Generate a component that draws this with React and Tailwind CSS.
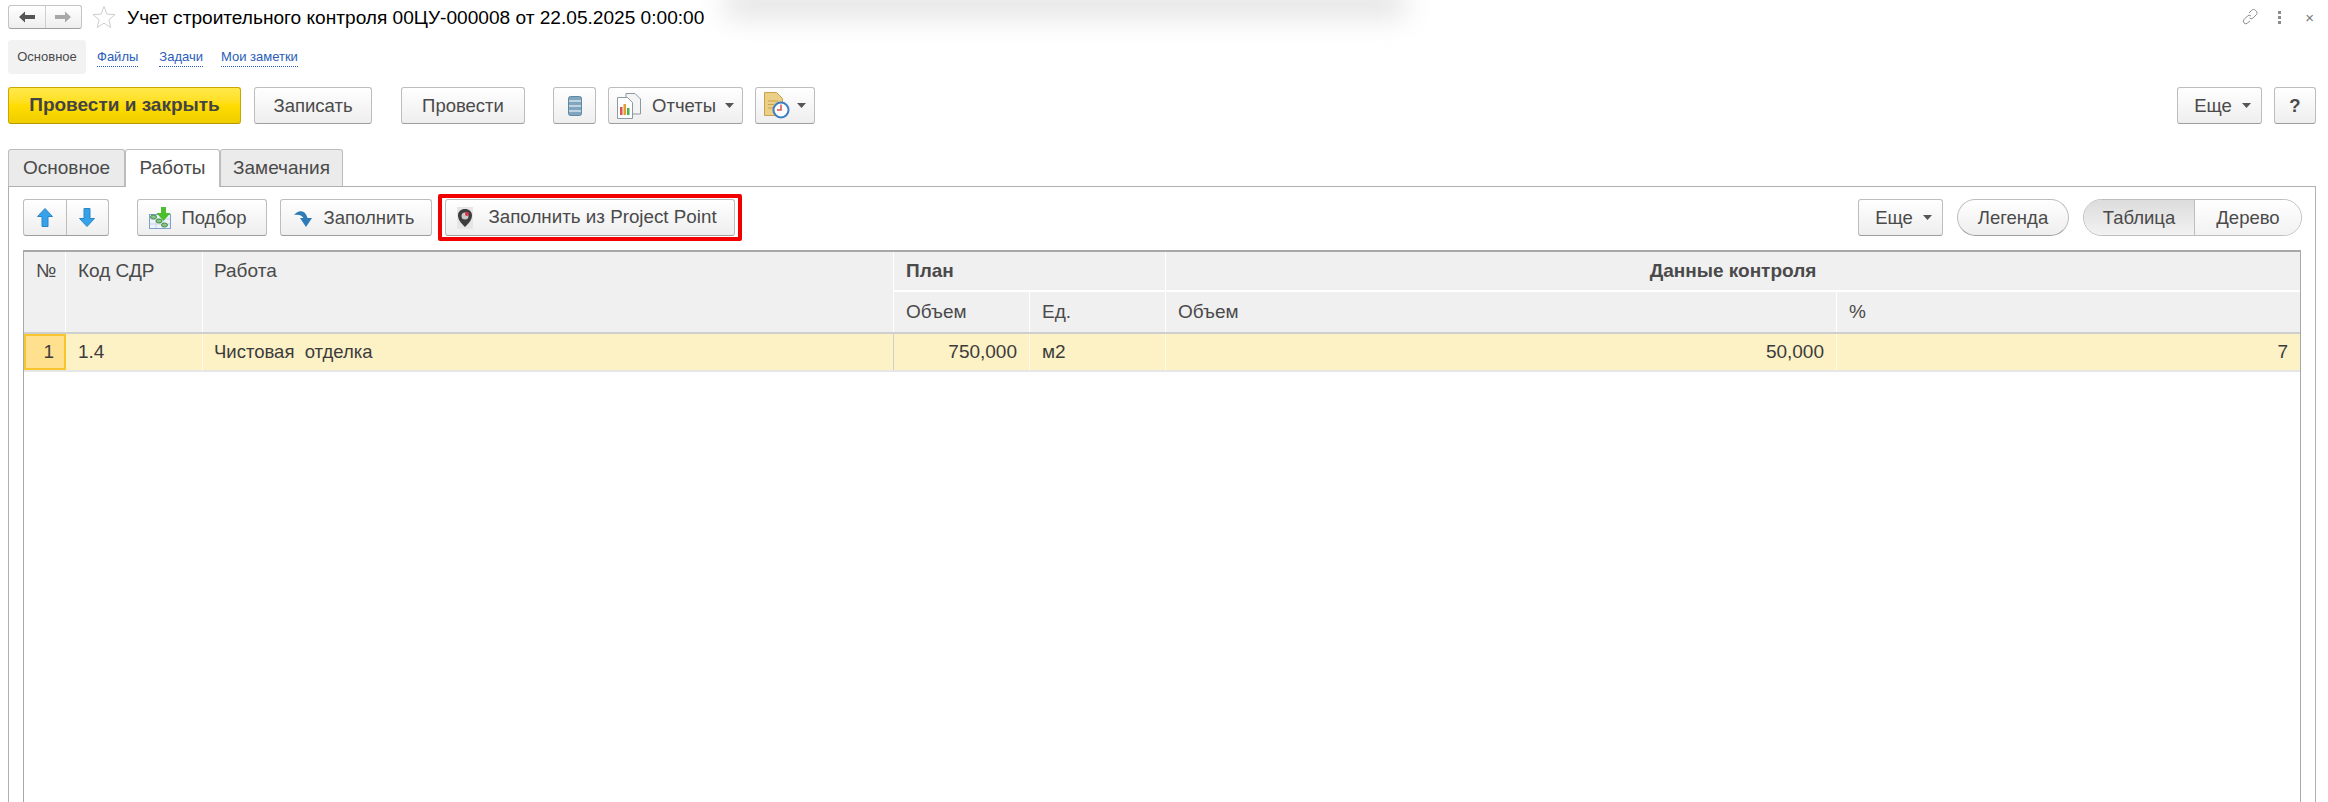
const btn =
  "flex h-[37px] items-center justify-center rounded-[3px] border border-[#bdbdbd] border-b-[#9e9e9e] bg-gradient-to-b from-white to-[#eeeeee] text-[18.500px] text-[#4a4a4a]";

function Caret({ className = "" }) {
  return (
    <svg width="9" height="5" viewBox="0 0 9 5" className={className}>
      <path d="M0 0h9L4.500 5z" fill="#555" />
    </svg>
  );
}

function Star() {
  return (
    <svg width="24" height="24" viewBox="0 0 24 24" className="ml-[10px]">
      <path
        d="M12 1.500l3 7.600 8 .5-6.200 5.100 2 7.800L12 18.200 5.200 22.500l2-7.800L1 9.600l8-.5z"
        fill="none"
        stroke="#cfcfcf"
      />
    </svg>
  );
}

function ArrowLeft({ color }) {
  return (
    <svg width="16" height="12" viewBox="0 0 16 12">
      <path d="M0 6l6-5.500V4h10v4H6v3.500z" fill={color} />
    </svg>
  );
}

function ArrowRight({ color }) {
  return (
    <svg width="16" height="12" viewBox="0 0 16 12">
      <path d="M16 6l-6-5.500V4H0v4h10v3.500z" fill={color} />
    </svg>
  );
}

function BlueUp() {
  return (
    <svg width="16" height="19" viewBox="0 0 16 19">
      <path d="M8 .5l7.500 8H11v10H5v-10H.5z" fill="#35a2ea" stroke="#2b86c5" strokeWidth="1" />
    </svg>
  );
}

function BlueDown() {
  return (
    <svg width="16" height="19" viewBox="0 0 16 19">
      <path d="M8 18.500l7.500-8H11V.5H5v10H.5z" fill="#35a2ea" stroke="#2b86c5" strokeWidth="1" />
    </svg>
  );
}

function StackIcon() {
  return (
    <svg width="14" height="20" viewBox="0 0 14 20">
      <rect x="0.5" y="0.5" width="13" height="19" rx="2" fill="#7fa5bf" stroke="#5f87a3" />
      <path d="M1 5h12M1 10h12M1 15h12" stroke="#d5e3ec" strokeWidth="1.500" />
    </svg>
  );
}

function ReportIcon() {
  return (
    <svg width="24" height="26" viewBox="0 0 24 26">
      <path d="M9 .5h9l5.500 5.500v15H9z" fill="#f4f4f4" stroke="#8a9aa5" />
      <path d="M.5 4.500h10l5 5v16H.5z" fill="#fff" stroke="#8a9aa5" />
      <rect x="3" y="14" width="2.500" height="8" fill="#d9534f" />
      <rect x="6.500" y="11" width="2.500" height="11" fill="#e0a030" />
      <rect x="10" y="15" width="2.500" height="7" fill="#4caf50" />
    </svg>
  );
}

function ClockDocIcon() {
  return (
    <svg width="26" height="27" viewBox="0 0 26 27">
      <path d="M.5.5h12l6 6v17H.5z" fill="#eccf86" stroke="#c9a24f" />
      <path d="M4 9h10M4 12.500h6M4 16h5" stroke="#c9a24f" />
      <circle cx="17" cy="18" r="7.500" fill="#fff" stroke="#3d7fc4" strokeWidth="2" />
      <path d="M17 12.500V18h-4" stroke="#d9534f" strokeWidth="1.500" fill="none" />
    </svg>
  );
}

function PickIcon() {
  return (
    <svg width="23" height="22" viewBox="0 0 23 22">
      <rect x="0.5" y="7.500" width="21" height="14" fill="#eef3fa" stroke="#7f9fcb" />
      <path d="M7 8v13M14 8v13M1 12h20M1 17h20" stroke="#c7d4e6" />
      <path d="M12 0h5v6h4.500L14.500 14 7.500 6H12z" fill="#4cc02c" />
      <ellipse cx="4.500" cy="10" rx="3" ry="2" fill="#8cc08c" stroke="#3f8f3f" />
      <ellipse cx="10" cy="14" rx="3" ry="2" fill="#8cc08c" stroke="#3f8f3f" />
      <ellipse cx="15.500" cy="18" rx="3" ry="2" fill="#8cc08c" stroke="#3f8f3f" />
    </svg>
  );
}

function FillIcon() {
  return (
    <svg width="20" height="18" viewBox="0 0 20 18">
      <path d="M0 6C4 1 11 0 13.500 9H18l-6 9-6-9h3.500C8 6 4 5 0 6z" fill="#2e7bb5" />
    </svg>
  );
}

function PointLogo() {
  return (
    <svg width="16" height="22" viewBox="0 0 16 22">
      <rect width="16" height="22" fill="#e6e6e6" />
      <path
        d="M8 2c4 0 7 2.500 7 6.500 0 5-4.500 9-7 11.500-2.500-2.500-7-6.500-7-11.500C1 4.500 4 2 8 2z"
        fill="#3d3d3d"
      />
      <circle cx="8" cy="9" r="3.500" fill="#c9c9c9" />
      <circle cx="10" cy="7" r="2" fill="#e0324a" />
    </svg>
  );
}

function LinkIcon() {
  return (
    <svg width="16" height="16" viewBox="0 0 16 16" fill="none" stroke="#8c8c8c">
      <path d="M7 4l2.500-2.500a2.500 2.500 0 0 1 4 0 2.700 2.700 0 0 1 1 4L11 9a2.500 2.500 0 0 1-3.500 0" />
      <path d="M9 7a2.500 2.500 0 0 0-3.500 0L2 10.500a2.700 2.700 0 0 0 0 3.500 2.500 2.500 0 0 0 3.500 0L8 12" />
    </svg>
  );
}

function Toolbar() {
  return (
    <div className="mt-[13px] flex pl-2 pr-3">
      <button className="flex h-[37px] w-[233px] items-center justify-center rounded-[3px] border border-[#c9a800] border-b-[#b59800] bg-gradient-to-b from-[#ffe94a] via-[#ffdd00] to-[#efcd00] text-[19px] font-bold text-[#444444]">
        Провести и закрыть
      </button>
      <button className={`${btn} ml-[13px] w-[118px]`}>Записать</button>
      <button className={`${btn} ml-[29px] w-[124px]`}>Провести</button>
      <button className={`${btn} ml-[28px] w-[43px]`}>
        <StackIcon />
      </button>
      <button className={`${btn} ml-[12px] w-[135px]`}>
        <ReportIcon />
        <span className="ml-[11px]">Отчеты</span>
        <Caret className="ml-[9px]" />
      </button>
      <button className={`${btn} ml-[12px] w-[60px]`}>
        <ClockDocIcon />
        <Caret className="ml-[7px]" />
      </button>
      <button className={`${btn} ml-auto w-[85px] pl-[6px]`}>
        Еще
        <Caret className="ml-[10px]" />
      </button>
      <button className={`${btn} ml-[12px] w-[42px] font-bold`}>?</button>
    </div>
  );
}

function PanelToolbar() {
  return (
    <div className="flex pl-[14px] pr-[13px]">
      <div className={`${btn} w-[86px]`}>
        <div className="flex flex-1 justify-center">
          <BlueUp />
        </div>
        <div className="flex h-full flex-1 items-center justify-center border-l border-[#bdbdbd]">
          <BlueDown />
        </div>
      </div>
      <button className={`${btn} ml-[28px] w-[130px] pr-[8px]`}>
        <PickIcon />
        <span className="ml-[9px]">Подбор</span>
      </button>
      <button className={`${btn} ml-[13px] w-[152px] pr-[4px]`}>
        <FillIcon />
        <span className="ml-[10px]">Заполнить</span>
      </button>
      <div className="-my-[5px] ml-[6px] rounded-[2px] border-[4px] border-[#f20000] px-[3px] py-px">
        <button className={`${btn} w-[290px] pr-[6px]`}>
          <PointLogo />
          <span className="ml-[15px] text-[18.800px]">Заполнить из Project Point</span>
        </button>
      </div>
      <button className={`${btn} ml-auto w-[85px] pl-[6px]`}>
        Еще
        <Caret className="ml-[10px]" />
      </button>
      <button className={`${btn} ml-[14px] w-[112px] rounded-full`}>Легенда</button>
      <div className="ml-[14px] flex h-[37px] w-[219px] overflow-hidden rounded-full border border-[#bdbdbd] text-[18.500px] text-[#4a4a4a]">
        <div className="flex w-[111px] items-center justify-center border-r border-[#bdbdbd] bg-gradient-to-b from-[#dcdcdc] to-[#f2f2f2]">
          Таблица
        </div>
        <div className="flex flex-1 items-center justify-center bg-gradient-to-b from-white to-[#f2f2f2]">
          Дерево
        </div>
      </div>
    </div>
  );
}

const headCell = "flex items-center border-r border-white px-[12px]";
const dataCell = "flex items-center border-r border-[#fffbe9] px-[12px]";

function WorkTable() {
  return (
    <div className="mx-[14px] mt-[14px] flex-1 border-x border-t-2 border-[#a8a8a8] text-[19px] text-[#4a4a4a]">
      <div className="grid grid-cols-[42px_137px_691px_136px_136px_671px_1fr] grid-rows-[40px_40px] border-b-2 border-[#cfcfcf] bg-[#f0f0f0]">
        <div className="row-span-2 border-r border-white px-[12px] pt-[5px]">№</div>
        <div className="row-span-2 border-r border-white px-[12px] pt-[5px]">Код СДР</div>
        <div className="row-span-2 border-r border-white px-[11px] pt-[5px]">Работа</div>
        <div className={`${headCell} col-span-2 border-b-2 border-b-white font-bold`}>План</div>
        <div className={`${headCell} col-span-2 justify-center border-b-2 border-b-white border-r-0 font-bold`}>
          Данные контроля
        </div>
        <div className={headCell}>Объем</div>
        <div className={headCell}>Ед.</div>
        <div className={headCell}>Объем</div>
        <div className={`${headCell} border-r-0`}>%</div>
      </div>
      <div className="grid h-[38px] grid-cols-[42px_137px_691px_136px_136px_671px_1fr] border-b-2 border-[#e6e6e6] bg-[#fdf1c6] text-[#3c3c3c]">
        <div className="flex items-center justify-end border-2 border-[#f8c52d] bg-[#fee08f] px-[10px]">1</div>
        <div className={dataCell}>1.4</div>
        <div className="flex items-center whitespace-pre border-r border-[#cfcfcf] px-[11px] text-[18.500px]">Чистовая  отделка</div>
        <div className={`${dataCell} justify-end`}>750,000</div>
        <div className={dataCell}>м2</div>
        <div className={`${dataCell} justify-end`}>50,000</div>
        <div className={`${dataCell} justify-end border-r-0`}>7</div>
      </div>
    </div>
  );
}

export default function App() {
  return (
    <div className="relative flex h-[802px] w-[2328px] flex-col overflow-hidden bg-white font-['Liberation_Sans',sans-serif]">
      {/* shadow of a popup above the window */}
      <div className="absolute -top-[12px] left-[725px] h-[30px] w-[680px] bg-[#e4e4e4] blur-[14px]" />

      <div className="relative mt-[5px] flex h-[24px] items-center pl-2 pr-[14px]">
        <div className="flex h-[24px] w-[74px] rounded-[3px] border border-[#c4c4c4] border-b-[#9e9e9e] bg-gradient-to-b from-white to-[#eeeeee]">
          <div className="flex flex-1 items-center justify-center border-r border-[#cfcfcf]">
            <ArrowLeft color="#555555" />
          </div>
          <div className="flex flex-1 items-center justify-center">
            <ArrowRight color="#a8a8a8" />
          </div>
        </div>
        <Star />
        <span className="ml-[11px] mt-[2px] text-[19.100px] text-black">
          Учет строительного контроля 00ЦУ-000008 от 22.05.2025 0:00:00
        </span>
        <div className="ml-auto flex items-center">
          <LinkIcon />
          <div className="ml-[20px] flex flex-col gap-[2px]">
            <span className="size-[3px] bg-[#8c8c8c]" />
            <span className="size-[3px] bg-[#8c8c8c]" />
            <span className="size-[3px] bg-[#8c8c8c]" />
          </div>
          <span className="ml-[24px] text-[15px] leading-none text-[#777777]">×</span>
        </div>
      </div>

      <div className="relative mt-[11px] flex h-[34px] items-center pl-2 text-[13px]">
        <div className="flex h-full w-[78px] items-center justify-center rounded-[3px] bg-[#f2f2f2] text-[#4a4a4a]">
          Основное
        </div>
        <a className="ml-[11px] border-b border-dotted border-[#2a5db8] text-[#2a5db8]">Файлы</a>
        <a className="ml-[21px] border-b border-dotted border-[#2a5db8] text-[#2a5db8]">Задачи</a>
        <a className="ml-[18px] border-b border-dotted border-[#2a5db8] text-[#2a5db8]">Мои заметки</a>
      </div>

      <Toolbar />

      <div className="mt-[25px] flex h-[37px] pl-2 text-[19px] text-[#4a4a4a]">
        <div className="flex w-[117px] items-center justify-center rounded-t-[3px] border border-b-0 border-[#bdbdbd] bg-[#ebebeb]">
          Основное
        </div>
        <div className="relative z-10 -mb-px flex w-[95px] items-center justify-center rounded-t-[3px] border border-b-0 border-[#bdbdbd] bg-white">
          Работы
        </div>
        <div className="flex w-[123px] items-center justify-center rounded-t-[3px] border border-b-0 border-[#bdbdbd] bg-[#ebebeb]">
          Замечания
        </div>
      </div>

      <div className="ml-2 mr-3 flex flex-1 flex-col border-x border-t border-[#b0b0b0] pt-[12px]">
        <PanelToolbar />
        <WorkTable />
      </div>
    </div>
  );
}
